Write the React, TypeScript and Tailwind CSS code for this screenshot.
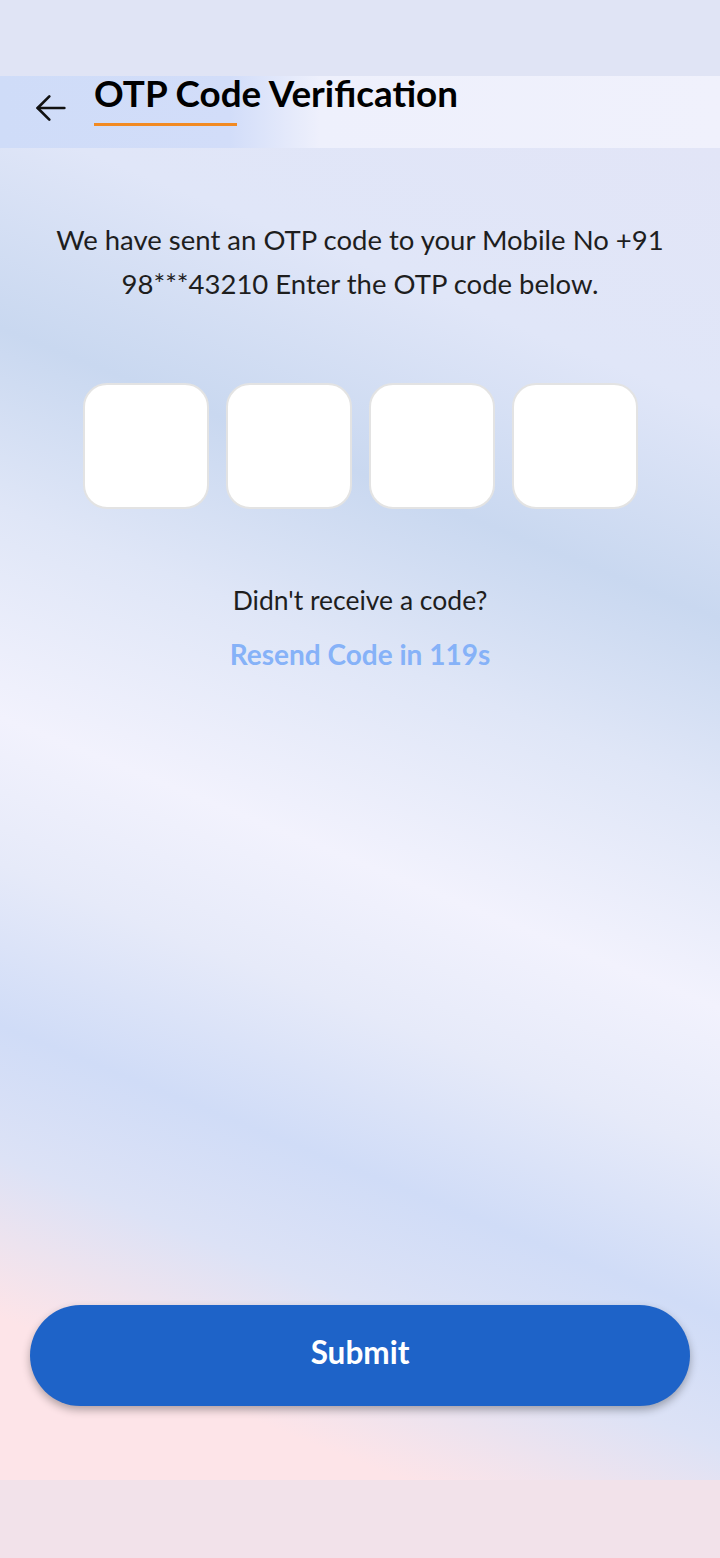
export default function App() {
  const boxes = [0, 1, 2, 3];
  return (
    <div className="w-[720px] h-[1558px] flex flex-col font-['Lato','Noto_Sans',sans-serif] text-[#1c1c1c]">
      <div className="h-[76px] bg-[#e0e4f5]" />

      <header className="h-[72px] flex items-start bg-[linear-gradient(90deg,#cfdcf8_0px,#d2ddf9_230px,#eef0fc_320px,#f0f1fc_720px)]">
        <button className="w-[94px] h-[64px] flex items-center justify-start pl-[31px]">
          <svg width="40" height="40" viewBox="0 0 24 24" fill="none" stroke="#111" strokeWidth="1.6" strokeLinecap="round" strokeLinejoin="round">
            <path d="M20 12H4" />
            <path d="M11 5l-7 7 7 7" />
          </svg>
        </button>
        <div className="flex flex-col">
          <h1 className="text-[36.8px] leading-[36px] font-bold text-black -mt-[1px]">
            OTP Code Verification
          </h1>
          <div className="mt-[12px] h-[3px] w-[143px] bg-[#f28a22]" />
        </div>
      </header>

      <main className="flex-1 flex flex-col items-center bg-[linear-gradient(202deg,#e2e5f7_0%,#e0e6f8_16%,#c9d8f0_29%,#dfe6f7_40%,#f2f2fd_53%,#e6eaf9_62%,#d0dcf7_72%,#dce2f6_80%,#fde4e8_90%)]">
        <p className="mt-[70px] w-[660px] text-center text-[27.5px] leading-[44px] text-[#1e1e1e]">
          We have sent an OTP code to your Mobile No +91 98***43210 Enter the OTP code below.
        </p>

        <div className="mt-[77px] flex gap-[17px]">
          {boxes.map((b) => (
            <div
              key={b}
              className="w-[126px] h-[126px] rounded-[24px] bg-white border-2 border-[#e3e3e3]"
            />
          ))}
        </div>

        <p className="mt-[75px] text-[26.5px] leading-[32px] text-[#1e1e1e]">Didn't receive a code?</p>
        <p className="mt-[22px] text-[28px] leading-[32px] font-bold text-[#86b2f8]">Resend Code in 119s</p>

        <div className="flex-1" />

        <div className="w-full px-[30px] pb-[74px]">
          <button className="w-full h-[101px] rounded-full bg-[#1e63c8] text-white text-[31.5px] font-bold pb-[6px] shadow-[0_4px_8px_rgba(0,0,0,0.3)]">
            Submit
          </button>
        </div>
      </main>

      <div className="h-[78px] bg-[#f2e2ea]" />
    </div>
  );
}
